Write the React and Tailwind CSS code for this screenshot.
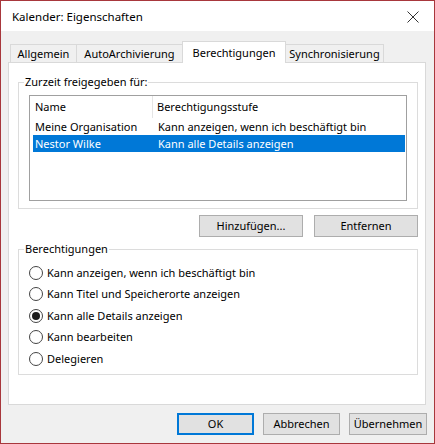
import React, { useState } from "react";

const TABS = [
  { label: "Allgemein", w: "w-[67px]" },
  { label: "AutoArchivierung", w: "w-[107px]" },
  { label: "Berechtigungen", w: "w-[104px]" },
  { label: "Synchronisierung", w: "w-[99px]" },
];

const SHARES = [
  { name: "Meine Organisation", level: "Kann anzeigen, wenn ich beschäftigt bin" },
  { name: "Nestor Wilke", level: "Kann alle Details anzeigen" },
];

const LEVELS = [
  "Kann anzeigen, wenn ich beschäftigt bin",
  "Kann Titel und Speicherorte anzeigen",
  "Kann alle Details anzeigen",
  "Kann bearbeiten",
  "Delegieren",
];

function Tab({ label, w, active }) {
  if (active) {
    return (
      <div
        className={`${w} -ml-px -mb-px relative z-10 h-[22px] flex items-center justify-center bg-white border border-b-0 border-[#d9d9d9]`}
      >
        {label}
      </div>
    );
  }
  return (
    <div
      className={`${w} -ml-px h-[18px] flex items-center justify-center bg-[#f0f0f0] border border-b-0 border-[#d9d9d9]`}
    >
      {label}
    </div>
  );
}

function Button({ children, w, primary }) {
  return (
    <button
      type="button"
      className={`${w} h-[22px] flex items-center justify-center bg-[#e1e1e1] text-black ${
        primary ? "border-2 border-[#0078d7]" : "border border-[#adadad]"
      }`}
    >
      {children}
    </button>
  );
}

function Radio({ label, checked, onSelect }) {
  return (
    <div className="h-[21.5px] flex items-center pl-[10px] gap-[4px]" onClick={onSelect}>
      <span className="w-[14px] h-[14px] rounded-full border border-[#444] bg-white flex items-center justify-center">
        {checked ? <span className="w-[8px] h-[8px] rounded-full bg-[#1b1b1b]" /> : null}
      </span>
      <span>{label}</span>
    </div>
  );
}

export default function App() {
  const [level, setLevel] = useState(2);
  const [sel, setSel] = useState(1);

  return (
    <div
      className="w-[435px] h-[444px] flex flex-col border border-[#a8373c] bg-[#f0f0f0] text-[11px] leading-[16px] text-black"
      style={{ fontFamily: '"Noto Sans", "Open Sans", sans-serif' }}
    >
      {/* title bar */}
      <div className="h-[30px] shrink-0 bg-white flex items-center justify-between pl-[11px] pr-[13px] pt-[2px]">
        <span className="text-[11.5px]">Kalender: Eigenschaften</span>
        <svg width="12" height="12" viewBox="0 0 12 12" className="mr-[2px]">
          <path d="M0.5 0.5 L11.5 11.5 M11.5 0.5 L0.5 11.5" stroke="#333" strokeWidth="1" />
        </svg>
      </div>

      <div className="px-[7px] pt-[10px]">
        {/* tabs */}
        <div className="flex items-end pl-[3px] h-[21px]">
          {TABS.map((t, i) => (
            <Tab key={t.label} label={t.label} w={t.w} active={i === 2} />
          ))}
        </div>

        {/* tab page */}
        <div className="w-[418px] h-[343px] bg-white border border-[#d9d9d9]">
          <fieldset className="ml-[9px] mt-[11px] w-[400px] border border-[#dcdcdc] pb-[7px]">
            <legend className="ml-[5px] px-[1px]">Zurzeit freigegeben für:</legend>
            <div className="ml-[10px] mt-[5px] w-[378px] h-[106px] border border-[#a0a0a0] bg-white">
              <div className="h-[22px] flex items-center">
                <div className="w-[123px] pl-[5px] h-full flex items-center border-r border-[#e5e5e5]">
                  Name
                </div>
                <div className="pl-[4px]">Berechtigungsstufe</div>
              </div>
              {SHARES.map((s, i) => (
                <div
                  key={s.name}
                  onClick={() => setSel(i)}
                  className={`ml-[3px] mr-[1px] h-[17px] flex items-center ${
                    i === sel ? "bg-[#0078d7] text-white" : ""
                  }`}
                >
                  <div className="w-[121px] pl-[2px]">{s.name}</div>
                  <div className="pl-[4px]">{s.level}</div>
                </div>
              ))}
            </div>
          </fieldset>

          <div className="ml-[9px] w-[400px] mt-[6px] flex justify-end gap-[11px]">
            <Button w="w-[104px]">Hinzufügen...</Button>
            <Button w="w-[104px]">Entfernen</Button>
          </div>

          <fieldset className="ml-[9px] mt-[4px] w-[400px] border border-[#dcdcdc] pt-[5px] pb-[4px]">
            <legend className="ml-[5px] px-[1px]">Berechtigungen</legend>
            {LEVELS.map((l, i) => (
              <Radio key={l} label={l} checked={i === level} onSelect={() => setLevel(i)} />
            ))}
          </fieldset>
        </div>

        {/* dialog buttons */}
        <div className="mt-[8px] w-[419px] flex justify-end gap-[9px]">
          <Button w="w-[77px]" primary>
            OK
          </Button>
          <Button w="w-[77px]">Abbrechen</Button>
          <Button w="w-[78px]">Übernehmen</Button>
        </div>
      </div>
    </div>
  );
}
